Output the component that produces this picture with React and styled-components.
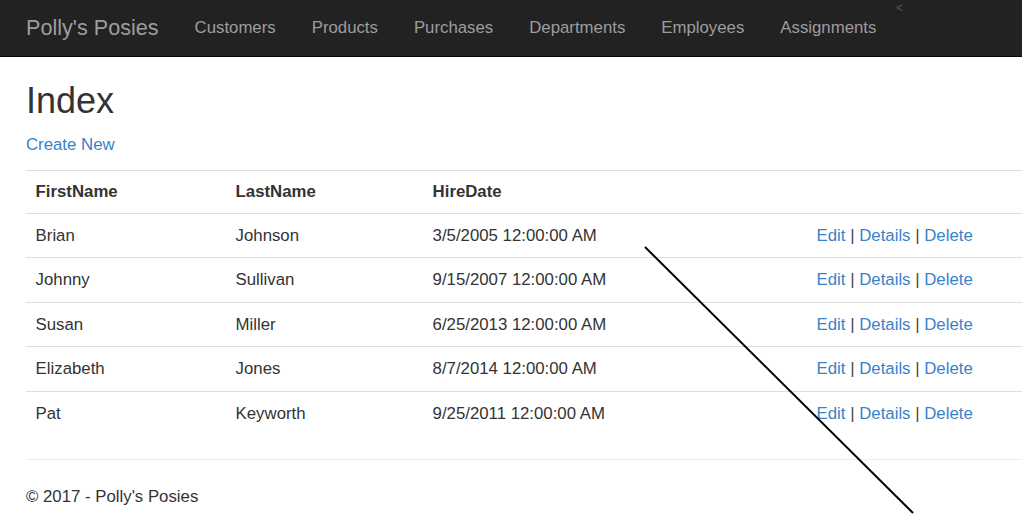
import styled, { createGlobalStyle } from 'styled-components'

const GlobalStyle = createGlobalStyle`
  html, body {
    margin: 0;
    padding: 0;
    overflow: hidden;
    background: #fff;
  }
  body {
    font-family: 'Liberation Sans', Arial, sans-serif;
    font-size: 16.8px;
    line-height: 24px;
    color: #333;
  }
`

const Page = styled.div`
  position: relative;
  width: 1022px;
  height: 517px;
  overflow: hidden;
`

const Navbar = styled.nav`
  height: 56px;
  background: #222;
  border-bottom: 1px solid #080808;
  display: flex;
  align-items: center;
  padding-left: 26px;
  position: relative;
`

const Brand = styled.a`
  font-size: 21.6px;
  line-height: 24px;
  color: #9d9d9d;
  padding-right: 18px;
  margin-top: -1px;
`

const NavList = styled.ul`
  list-style: none;
  margin: 0;
  padding: 0;
  display: flex;
`

const NavItem = styled.li`
  padding: 0 18px;
  color: #9d9d9d;
  font-size: 16.8px;
  line-height: 24px;
`

const Toggle = styled.span`
  position: absolute;
  left: 896px;
  top: 0;
  font-size: 12px;
  line-height: 16px;
  color: #555;
`

const Container = styled.main`
  padding-left: 26px;
`

const Title = styled.h2`
  font-size: 36px;
  font-weight: 500;
  line-height: 39.6px;
  margin: 24px 0 12px;
`

const Link = styled.a`
  color: #3783c9;
  text-decoration: none;
`

const Para = styled.p`
  margin: 0 0 13px;
`

const Table = styled.table`
  width: 1100px;
  table-layout: fixed;
  border-collapse: collapse;
  margin-bottom: 24px;
`

const Th = styled.th`
  text-align: left;
  font-weight: bold;
  padding: 0 9.6px;
  height: 42px;
  border-top: 1px solid #ddd;
  border-bottom: 1px solid #ddd;
`

const Td = styled.td`
  padding: 1px 9.6px 0;
  height: 42.5px;
  white-space: nowrap;
  border-bottom: ${p => (p.$last ? 'none' : '1px solid #ddd')};
`

const Sep = styled.span`
  color: #444;
`

const Rule = styled.hr`
  border: 0;
  border-top: 1px solid #eee;
  margin: 0 0 25px;
`

const Footer = styled.footer`
  p {
    margin: 0;
  }
`

const Overlay = styled.svg`
  position: absolute;
  left: 0;
  top: 0;
  pointer-events: none;
`

const rows = [
  ['Brian', 'Johnson', '3/5/2005 12:00:00 AM'],
  ['Johnny', 'Sullivan', '9/15/2007 12:00:00 AM'],
  ['Susan', 'Miller', '6/25/2013 12:00:00 AM'],
  ['Elizabeth', 'Jones', '8/7/2014 12:00:00 AM'],
  ['Pat', 'Keyworth', '9/25/2011 12:00:00 AM'],
]

const nav = ['Customers', 'Products', 'Purchases', 'Departments', 'Employees', 'Assignments']

export default function App() {
  return (
    <Page>
      <GlobalStyle />
      <Navbar>
        <Brand>Polly's Posies</Brand>
        <NavList>
          {nav.map(n => <NavItem key={n}>{n}</NavItem>)}
        </NavList>
        <Toggle>&lt;</Toggle>
      </Navbar>
      <Container>
        <Title>Index</Title>
        <Para><Link>Create New</Link></Para>
        <Table>
          <colgroup>
            <col style={{ width: 200 }} />
            <col style={{ width: 197 }} />
            <col style={{ width: 384 }} />
            <col />
          </colgroup>
          <thead>
            <tr>
              <Th>FirstName</Th>
              <Th>LastName</Th>
              <Th>HireDate</Th>
              <Th />
            </tr>
          </thead>
          <tbody>
            {rows.map((r, i) => {
              const last = i === rows.length - 1
              return (
                <tr key={r[0]}>
                  <Td $last={last}>{r[0]}</Td>
                  <Td $last={last}>{r[1]}</Td>
                  <Td $last={last}>{r[2]}</Td>
                  <Td $last={last}>
                    <Link>Edit</Link> <Sep>|</Sep> <Link>Details</Link> <Sep>|</Sep> <Link>Delete</Link>
                  </Td>
                </tr>
              )
            })}
          </tbody>
        </Table>
        <Rule />
        <Footer>
          <p>&copy; 2017 - Polly's Posies</p>
        </Footer>
      </Container>
      <Overlay width="1022" height="517">
        <line x1="645" y1="247" x2="913" y2="513" stroke="#000" strokeWidth="2" />
      </Overlay>
    </Page>
  )
}
